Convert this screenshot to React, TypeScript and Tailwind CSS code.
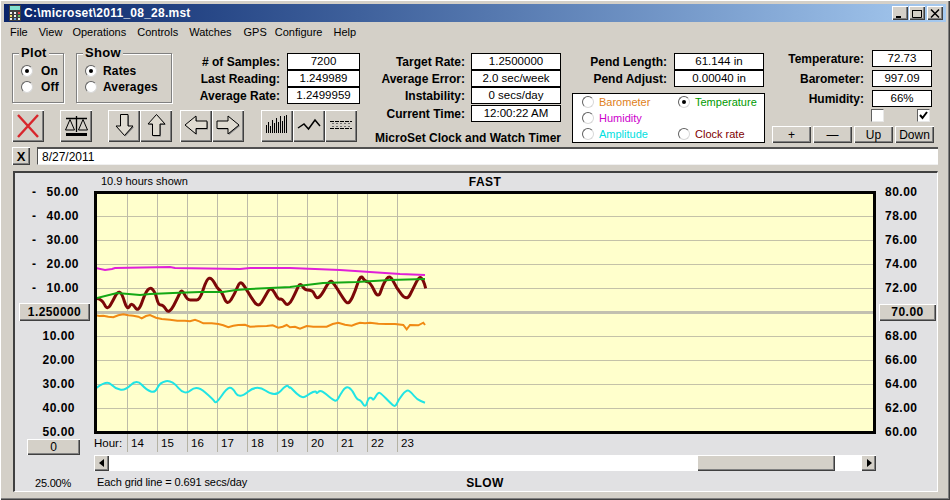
import React from "react";

const bevel = "bg-[#d4d0c8] shadow-[inset_1px_1px_0_#ffffff,inset_-1px_-1px_0_#404040,inset_-2px_-2px_0_#808080]";

const toPts = (ox: number, oy: number, pts: number[][]) => pts.map(([x, y]) => [ox + x / 3, oy + y / 3]);
const poly = (pts: number[][]) => pts.map(([x, y]) => `${x.toFixed(1)},${y.toFixed(1)}`).join(" ");
const smooth = (pts: number[][]) => {
  let d = `M${pts[0][0].toFixed(1)} ${pts[0][1].toFixed(1)}`;
  for (let i = 1; i < pts.length - 1; i++) {
    const mx = (pts[i][0] + pts[i + 1][0]) / 2;
    const my = (pts[i][1] + pts[i + 1][1]) / 2;
    d += ` Q${pts[i][0].toFixed(1)} ${pts[i][1].toFixed(1)} ${mx.toFixed(1)} ${my.toFixed(1)}`;
  }
  const l = pts[pts.length - 1];
  return `${d} L${l[0].toFixed(1)} ${l[1].toFixed(1)}`;
};

const maroon = smooth([
  ...toPts(90, 250, [[15,145],[35,145],[52,182],[70,150],[82,126],[95,128],[112,182],[125,156],[145,188],[165,130],[180,111],[195,125],[205,165],[220,165],[237,193],[265,140],[275,116],[292,150],[310,150],[330,150],[350,86],[365,83],[382,115],[395,125],[412,167],[435,130],[450,92],[465,110],[482,140],[505,173],[525,140],[543,108],[565,150],[575,145],[595,172]]),
  ...toPts(290, 250, [[20,120],[30,98],[45,120],[60,120],[70,125],[80,147],[95,135],[120,88],[135,105],[150,130],[170,160],[180,157],[195,125],[212,73],[225,95],[240,95],[265,148],[280,100],[300,73],[320,115],[350,153],[370,115],[388,78],[400,90],[407,115]]),
]);
const green = "97,298 117,293 140,295 150,294 173,293 200,292 223,292 236,290 250,289 270,288 290,287 323,283 357,282 390,280 425,279";
const magenta = "96,268 105,270 112,269 115,268 170,267 175,268 240,269 250,268 290,268 340,270 370,272 400,274 425,275";
const orange = poly([
  ...toPts(90, 250, [[15,195],[28,198],[40,197],[55,200],[70,202],[85,196],[100,193],[115,196],[130,197],[145,200],[155,205],[168,198],[180,195],[198,203],[215,207],[240,209],[262,212],[285,212],[300,214],[315,209],[328,214],[340,220],[365,220],[385,222],[400,226],[415,232],[430,227],[445,225],[465,224],[480,230],[505,229],[530,228],[548,226],[565,233],[578,230],[590,225],[600,232]]),
  ...toPts(290, 250, [[15,230],[30,236],[50,228],[70,230],[90,230],[110,230],[128,222],[145,218],[165,224],[185,227],[198,222],[210,218],[225,220],[240,218],[265,221],[290,222],[315,222],[340,225],[350,238],[360,225],[385,226],[400,218],[405,225]]),
]);
const cyan = smooth([
  ...toPts(0, 330, [[288,175],[320,150],[345,175],[375,182],[410,148],[440,180],[465,189],[480,157],[515,150],[555,197],[590,165],[640,208],[648,222],[680,175],[697,172],[718,207],[770,163],[825,202],[860,163],[870,175]]),
  ...toPts(290, 370, [[0,50],[20,72],[40,85],[60,70],[78,62],[80,72],[90,60],[105,70],[130,90],[140,94],[150,75],[168,48],[185,58],[200,88],[212,90],[226,114],[235,85],[245,82],[250,92],[265,66],[275,72],[300,98],[316,112],[325,90],[350,58],[365,68],[380,88],[405,98]]),
]);

function Radio({ on }: { on?: boolean }) {
  return (
    <span className="flex h-[12px] w-[12px] shrink-0 items-center justify-center rounded-full border border-[#606060] border-r-[#d8d8d8] border-b-[#d8d8d8] bg-white">
      {on && <span className="h-[4px] w-[4px] rounded-full bg-black" />}
    </span>
  );
}

function Group({ title, className, children }: { title: string; className: string; children: React.ReactNode }) {
  return (
    <div className={`relative h-[50px] border border-[#808080] shadow-[1px_1px_0_#ffffff,inset_1px_1px_0_#ffffff] ${className}`}>
      <span className="absolute left-[6px] top-[-8px] bg-[#d4d0c8] px-[2px] text-[13px] font-bold leading-[14px] tracking-[0.3px]">{title}</span>
      <div className="flex flex-col gap-[4px] pl-[8px] pt-[11px]">{children}</div>
    </div>
  );
}

function GroupRadio({ on, label, gap }: { on?: boolean; label: string; gap: string }) {
  return (
    <div className={`flex h-[12px] items-center ${gap} text-[12px] font-bold tracking-[0.15px]`}>
      <Radio on={on} />
      <span>{label}</span>
    </div>
  );
}

function Field({ label, value, w }: { label: string; value: string; w: string }) {
  return (
    <div className="flex h-[17px] items-center justify-end">
      <span className="whitespace-nowrap text-right text-[12px] font-bold">{label}</span>
      <span className={`${w} flex h-[17px] items-center justify-center border border-black bg-white text-[11.5px] leading-none`}>{value}</span>
    </div>
  );
}

function IconBtn({ children }: { children: React.ReactNode }) {
  return (
    <button className={`flex h-[32px] w-[32px] items-center justify-center ${bevel}`}>
      <svg width="28" height="28" viewBox="0 0 28 28" fill="none">{children}</svg>
    </button>
  );
}

function LegendItem({ on, label, color }: { on?: boolean; label: string; color: string }) {
  return (
    <div className={`flex h-[16px] items-center gap-[5px] text-[11px] ${color}`}>
      <Radio on={on} />
      <span>{label}</span>
    </div>
  );
}

function WinBtn({ children }: { children: React.ReactNode }) {
  return (
    <span className={`flex h-[14px] w-[16px] items-center justify-center ${bevel}`}>
      <svg width="10" height="9" viewBox="0 0 10 9" fill="none" stroke="black">{children}</svg>
    </span>
  );
}

const leftUpper = ["50.00", "40.00", "30.00", "20.00", "10.00"];
const leftLower = ["10.00", "20.00", "30.00", "40.00", "50.00"];
const rightUpper = ["80.00", "78.00", "76.00", "74.00", "72.00"];
const rightLower = ["68.00", "66.00", "64.00", "62.00", "60.00"];
const hours = [14, 15, 16, 17, 18, 19, 20, 21, 22, 23];
const vLines = [127, 157, 187, 217, 247, 277, 307, 337, 367, 397];
const hLines = [216, 240, 264, 288, 336, 360, 384, 408];
const bars = [8, 11, 7, 13, 10, 15, 11, 17, 12, 17, 18];
const menu: [string, string][] = [
  ["File", ""],
  ["View", ""],
  ["Operations", "-ml-[1px]"],
  ["Controls", ""],
  ["Watches", ""],
  ["GPS", "ml-[1px]"],
  ["Configure", "-ml-[3px]"],
  ["Help", ""],
];

export default function App() {
  return (
    <div className="h-[500px] w-[950px] overflow-hidden bg-[#d4d0c8] p-[4px] font-['Liberation_Sans',Arial,sans-serif] text-black shadow-[inset_1px_1px_0_#ffffff,inset_-1px_-1px_0_#404040,inset_-2px_-2px_0_#808080]">
      {/* title bar */}
      <div className="flex h-[18px] items-center justify-between bg-gradient-to-r from-[#0a246a] to-[#a6caf0] pl-[5px] pr-[3px]">
        <div className="flex items-center gap-[3px]">
          <svg width="12" height="16" viewBox="0 0 12 16">
            <rect width="12" height="16" fill="#404040" />
            <rect x="1" y="1" width="10" height="4" fill="#80e0d0" />
            <rect x="1" y="7" width="2" height="2" fill="#f0f0f0" />
            <rect x="5" y="7" width="2" height="2" fill="#f0f0f0" />
            <rect x="9" y="7" width="2" height="2" fill="#e04040" />
            <rect x="1" y="10" width="2" height="2" fill="#f0e060" />
            <rect x="5" y="10" width="2" height="2" fill="#f0f0f0" />
            <rect x="9" y="10" width="2" height="2" fill="#60c060" />
            <rect x="1" y="13" width="2" height="2" fill="#f0f0f0" />
            <rect x="5" y="13" width="2" height="2" fill="#60a0e0" />
            <rect x="9" y="13" width="2" height="2" fill="#f0f0f0" />
          </svg>
          <span className="text-[12px] font-bold tracking-[0.25px] text-white">C:\microset\2011_08_28.mst</span>
        </div>
        <div className="flex items-center">
          <WinBtn><path d="M1 8h5" strokeWidth="2" /></WinBtn>
          <span className="w-[1px]" />
          <WinBtn><path d="M1 1.5h8M0.5 1v7.5h9V1" /></WinBtn>
          <span className="w-[2px]" />
          <WinBtn><path d="M1 0.5l8 8M9 0.5l-8 8" strokeWidth="1.5" /></WinBtn>
        </div>
      </div>

      {/* menu */}
      <div className="mt-[1px] flex h-[19px] items-center gap-[11px] pl-[6px] text-[11px]">
        {menu.map(([m, c]) => (
          <span key={m} className={c}>{m}</span>
        ))}
      </div>

      {/* toolbar */}
      <div className="flex h-[105px] pl-[8px]">
        <div className="w-[350px] pt-[11px]">
          <div className="flex">
            <Group title="Plot" className="w-[52px]">
              <GroupRadio on label="On" gap="gap-[8px]" />
              <GroupRadio label="Off" gap="gap-[8px]" />
            </Group>
            <Group title="Show" className="ml-[12px] w-[96px]">
              <GroupRadio on label="Rates" gap="gap-[6px]" />
              <GroupRadio label="Averages" gap="gap-[6px]" />
            </Group>
            <div className="w-[188px]">
              <Field label="# of Samples:" value="7200" w="w-[73px] ml-[7px]" />
              <Field label="Last Reading:" value="1.249989" w="w-[73px] ml-[7px]" />
              <Field label="Average Rate:" value="1.2499959" w="w-[73px] ml-[7px]" />
            </div>
          </div>
          <div className="mt-[6px] flex">
            <IconBtn><path d="M4 3L24 25M24 3L4 25" stroke="#d8262c" strokeWidth="2.4" /></IconBtn>
            <span className="w-[16px]" />
            <IconBtn>
              <path d="M14.5 4V20M4 6.5H25" stroke="black" strokeWidth="1.3" />
              <path d="M8 7.5L3.5 18H12.5ZM21 7.5L16.5 18H25.5Z" stroke="black" />
              <path d="M4 22.5H25" stroke="black" strokeWidth="3" />
            </IconBtn>
            <span className="w-[16px]" />
            <IconBtn>
              <path d="M11.5 3.5H19V15H24L15.5 24.5L7 15H11.5Z" fill="#808080" />
              <path d="M10.5 2.5H18V14H23L14.5 23.5L6 14H10.5Z" stroke="black" fill="#e0dcd2" />
            </IconBtn>
            <IconBtn>
              <path d="M11.5 24.5H19V13H24L15.5 3.5L7 13H11.5Z" fill="#808080" />
              <path d="M10.5 23.5H18V12H23L14.5 2.5L6 12H10.5Z" stroke="black" fill="#e0dcd2" />
            </IconBtn>
            <span className="w-[8px]" />
            <IconBtn>
              <path d="M26 10V17.5H15V23L4 14L15 5V10Z" fill="#808080" />
              <path d="M25 9V16.5H14V22L3 13L14 4V9Z" stroke="black" fill="#e0dcd2" />
            </IconBtn>
            <IconBtn>
              <path d="M4 10V17.5H15V23L26 14L15 5V10Z" fill="#808080" />
              <path d="M3 9V16.5H14V22L25 13L14 4V9Z" stroke="black" fill="#e0dcd2" />
            </IconBtn>
            <span className="w-[17px]" />
            <IconBtn>
              {bars.map((b, i) => (
                <path key={i} d={`M${3.5 + i * 2} 21V${21 - b}`} stroke="black" strokeWidth="1" />
              ))}
            </IconBtn>
            <IconBtn><polyline points="3,16 9,12 13.5,17 20,8 25,14" stroke="black" strokeWidth="1.5" /></IconBtn>
            <IconBtn>
              <path d="M3 9.5H25M3 16.5H25" stroke="black" strokeDasharray="4 1" />
              <path d="M5 11.5H23M5 14.5H23" stroke="#707070" strokeDasharray="2 2" />
            </IconBtn>
          </div>
        </div>

        <div className="flex w-[199px] flex-col pt-[11px]">
          <Field label="Target Rate:" value="1.2500000" w="w-[90px] ml-[6px]" />
          <Field label="Average Error:" value="2.0 sec/week" w="w-[90px] ml-[6px]" />
          <Field label="Instability:" value="0 secs/day" w="w-[90px] ml-[6px]" />
          <div className="mt-[1px]"><Field label="Current Time:" value="12:00:22 AM" w="w-[90px] ml-[6px]" /></div>
          <div className="mt-[7px] whitespace-nowrap text-right text-[12px] font-bold">MicroSet Clock and Watch Timer</div>
        </div>

        <div className="w-[203px] pt-[11px]">
          <Field label="Pend Length:" value="61.144 in" w="w-[90px] ml-[7px]" />
          <Field label="Pend Adjust:" value="0.00040 in" w="w-[90px] ml-[7px]" />
          <div className="ml-[11px] mt-[6px] grid h-[50px] w-[193px] grid-cols-[96px_1fr] border border-black bg-white pl-[9px]">
            <div className="flex flex-col">
              <LegendItem label="Barometer" color="text-[#e08020]" />
              <LegendItem label="Humidity" color="text-[#cc00cc]" />
              <LegendItem label="Amplitude" color="text-[#00e0e0]" />
            </div>
            <div className="flex flex-col">
              <LegendItem on label="Temperature" color="text-[#009a00]" />
              <span className="h-[16px]" />
              <LegendItem label="Clock rate" color="text-[#800000]" />
            </div>
          </div>
        </div>

        <div className="ml-[8px] w-[163px] pt-[8px]">
          <div className="flex flex-col gap-[3px] pr-[3px]">
            <Field label="Temperature:" value="72.73" w="w-[60px] ml-[8px]" />
            <Field label="Barometer:" value="997.09" w="w-[60px] ml-[8px]" />
            <Field label="Humidity:" value="66%" w="w-[60px] ml-[8px]" />
          </div>
          <div className="mt-[2px] flex h-[12px] pl-[99px]">
            <span className="h-[13px] w-[13px] border border-[#606060] border-r-[#e8e8e8] border-b-[#e8e8e8] bg-white" />
            <span className="ml-[33px] h-[13px] w-[13px] border border-[#606060] border-r-[#e8e8e8] border-b-[#e8e8e8] bg-white">
              <svg width="11" height="11" viewBox="0 0 11 11" fill="none"><path d="M2 5L4.5 8L9 2" stroke="black" strokeWidth="2" /></svg>
            </span>
          </div>
          <div className="mt-[5px] flex gap-[2px]">
            {["+", "—", "Up", "Down"].map((b) => (
              <button key={b} className={`flex h-[17px] w-[39px] items-center justify-center text-[12px] leading-none ${bevel}`}>{b}</button>
            ))}
          </div>
        </div>
      </div>

      {/* note row */}
      <div className="flex h-[18px] pl-[8px]">
        <button className={`flex h-[18px] w-[18px] items-center justify-center text-[13px] font-bold leading-none ${bevel}`}>X</button>
        <div className="ml-[7px] flex h-[18px] w-[901px] items-center border-t-2 border-l border-[#505050] border-r-[#f0f0f0] border-b border-b-[#f0f0f0] bg-white pl-[4px] text-[12px]">8/27/2011</div>
      </div>

      {/* chart panel */}
      <div className="ml-[9px] mt-[6px] h-[321px] w-[925px] border-t-2 border-l-2 border-b border-r border-t-[#404040] border-l-[#404040] border-b-white border-r-white bg-[#e1e1e3]">
        <div className="flex h-[18px] items-center pl-[79px]">
          <div className="grid w-[782px] grid-cols-[1fr_auto_1fr] text-[12px]">
            <span className="pl-[7px] text-[11px]">10.9 hours shown</span>
            <span className="font-bold tracking-[0.4px]">FAST</span>
            <span />
          </div>
        </div>

        <div className="flex h-[243px]">
          <div className="-mt-[11px] w-[79px] text-[12px] font-bold tracking-[0.5px]">
            {leftUpper.map((v) => (
              <div key={v} className="flex h-[24px] items-center justify-between pl-[17px] pr-[15px]"><span>-</span><span>{v}</span></div>
            ))}
            <div className="flex h-[24px] items-center pl-[4px]">
              <button className={`flex h-[18px] w-[71px] items-center justify-center text-[12px] font-bold tracking-[0.4px] ${bevel}`}>1.250000</button>
            </div>
            {leftLower.map((v) => (
              <div key={v} className="flex h-[24px] items-center justify-end pr-[19px]">{v}</div>
            ))}
          </div>

          <div className="h-[243px] w-[782px] border-[3px] border-black bg-[#ffffcc]">
            <svg width="776" height="237" viewBox="97 194 776 237" fill="none" className="block">
              {hLines.map((y) => (<path key={y} d={`M97 ${y}.5H873`} stroke="#c4c2a8" />))}
              {vLines.map((x) => (<path key={x} d={`M${x}.5 194V431`} stroke="#bdbba8" />))}
              <path d="M97 312.5H873" stroke="#c2c0b0" strokeWidth="3" />
              <polyline points={orange} stroke="#f08a14" strokeWidth="2" />
              <path d={cyan} stroke="#20e4e4" strokeWidth="2" />
              <path d={maroon} stroke="#7c0808" strokeWidth="3" strokeLinejoin="round" />
              <polyline points={green} stroke="#14a814" strokeWidth="2" />
              <polyline points={magenta} stroke="#e020d8" strokeWidth="2" />
            </svg>
          </div>

          <div className="-mt-[11px] w-[60px] text-[12px] font-bold tracking-[0.5px]">
            {rightUpper.map((v) => (
              <div key={v} className="flex h-[24px] items-center pl-[9px]">{v}</div>
            ))}
            <div className="flex h-[24px] items-center pl-[3px]">
              <button className={`flex h-[17px] w-[57px] items-center justify-center text-[12px] font-bold tracking-[0.5px] ${bevel}`}>70.00</button>
            </div>
            {rightLower.map((v) => (
              <div key={v} className="flex h-[24px] items-center pl-[9px]">{v}</div>
            ))}
          </div>
        </div>

        <div className="flex">
          <div className="w-[79px] pl-[12px] pt-[5px]">
            <button className={`flex h-[16px] w-[53px] items-center justify-center text-[12px] ${bevel}`}>0</button>
          </div>
          <div className="w-[782px]">
            <div className="flex h-[18px] text-[11.5px] leading-[18px]">
              <span className="w-[33px]">Hour:</span>
              {hours.map((h) => (
                <span key={h} className="w-[30px] border-l border-[#b4b2a4] pl-[3px]">{h}</span>
              ))}
            </div>
            <div className="mt-[3px] flex h-[16px]">
              <span className={`flex h-[16px] w-[15px] items-center justify-center ${bevel}`}>
                <svg width="6" height="8" viewBox="0 0 6 8"><path d="M5 0V8L0 4Z" fill="black" /></svg>
              </span>
              <span className="h-[16px] w-[588px] bg-white" />
              <span className={`h-[16px] w-[138px] ${bevel}`} />
              <span className="h-[16px] w-[26px] bg-white" />
              <span className={`flex h-[16px] w-[15px] items-center justify-center ${bevel}`}>
                <svg width="6" height="8" viewBox="0 0 6 8"><path d="M1 0V8L6 4Z" fill="black" /></svg>
              </span>
            </div>
          </div>
        </div>

        <div className="mt-[3px] flex h-[18px] items-center text-[12px]">
          <div className="w-[79px] pl-[20px] text-[11px] tracking-[-0.2px]">25.00%</div>
          <div className="grid w-[782px] grid-cols-[1fr_auto_1fr]">
            <span className="pl-[3px] text-[11px] tracking-[-0.1px]">Each grid line = 0.691 secs/day</span>
            <span className="font-bold tracking-[0.4px]">SLOW</span>
            <span />
          </div>
        </div>
      </div>
    </div>
  );
}
